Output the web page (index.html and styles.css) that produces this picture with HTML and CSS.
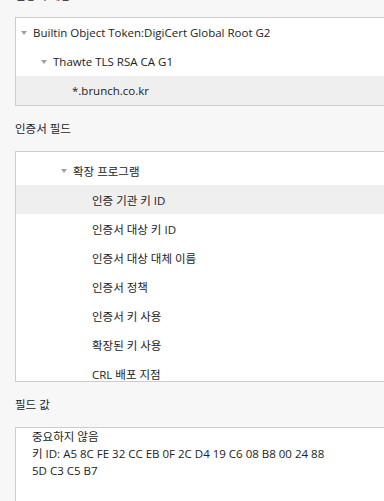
FILE: index.html
```html
<!DOCTYPE html>
<html lang="ko">
<head>
  <meta charset="UTF-8" />
  <title>인증서 보기</title>
  <link rel="stylesheet" href="styles.css">
</head>
<body>
  <div class="section-label first">인증서 계층</div>
  <div class="tree-box hierarchy">
    <div class="row level-0"><span class="twisty"></span>Builtin Object Token:DigiCert Global Root G2</div>
    <div class="row level-1"><span class="twisty"></span>Thawte TLS RSA CA G1</div>
    <div class="row leaf-2 selected">*.brunch.co.kr</div>
  </div>

  <div class="section-label">인증서 필드</div>
  <div class="tree-box fields">
    <div class="row level-2"><span class="twisty"></span>확장 프로그램</div>
    <div class="row level-3 selected">인증 기관 키 ID</div>
    <div class="row level-3">인증서 대상 키 ID</div>
    <div class="row level-3">인증서 대상 대체 이름</div>
    <div class="row level-3">인증서 정책</div>
    <div class="row level-3">인증서 키 사용</div>
    <div class="row level-3">확장된 키 사용</div>
    <div class="row level-3">CRL 배포 지점</div>
  </div>

  <div class="section-label">필드 값</div>
  <div class="value-box">중요하지 않음
키 ID: A5 8C FE 32 CC EB 0F 2C D4 19 C6 08 B8 00 24 88
5D C3 C5 B7</div>
</body>
</html>
```
FILE: styles.css
```css
body {
  margin: 0;
  padding: 0 0 0 15px;
  background: #f7f7f7;
  font-family: 'Open Sans', 'Noto Sans CJK KR', sans-serif;
  font-size: 11.5px;
  color: #222;
  overflow: hidden;
}
.section-label {
  line-height: 20px;
  margin: 13px 0 12px;
}
.section-label.first {
  margin-top: -14px;
  margin-bottom: 11px;
}
.tree-box {
  background: #fff;
  border: 1px solid #cdcdcd;
  border-right: none;
  overflow: hidden;
}
.fields {
  padding-top: 4px;
  height: 225px;
}
.row {
  height: 29px;
  white-space: nowrap;
  display: flex;
  align-items: center;
}
.row.selected {
  background: #efefef;
}
.level-0 { padding-left: 5px; }
.level-1 { padding-left: 25px; }
.level-2 { padding-left: 45px; }
.leaf-2 { padding-left: 56px; }
.level-3 { padding-left: 76px; }
.twisty {
  width: 0;
  height: 0;
  border-left: 3px solid transparent;
  border-right: 3px solid transparent;
  border-top: 4px solid #a0a0a0;
  margin-right: 6px;
  margin-top: 1px;
}
.value-box {
  background: #fff;
  border: 1px solid #cdcdcd;
  border-right: none;
  border-bottom: none;
  height: 100px;
  padding-left: 16px;
  line-height: 17px;
  white-space: pre-line;
}
```
